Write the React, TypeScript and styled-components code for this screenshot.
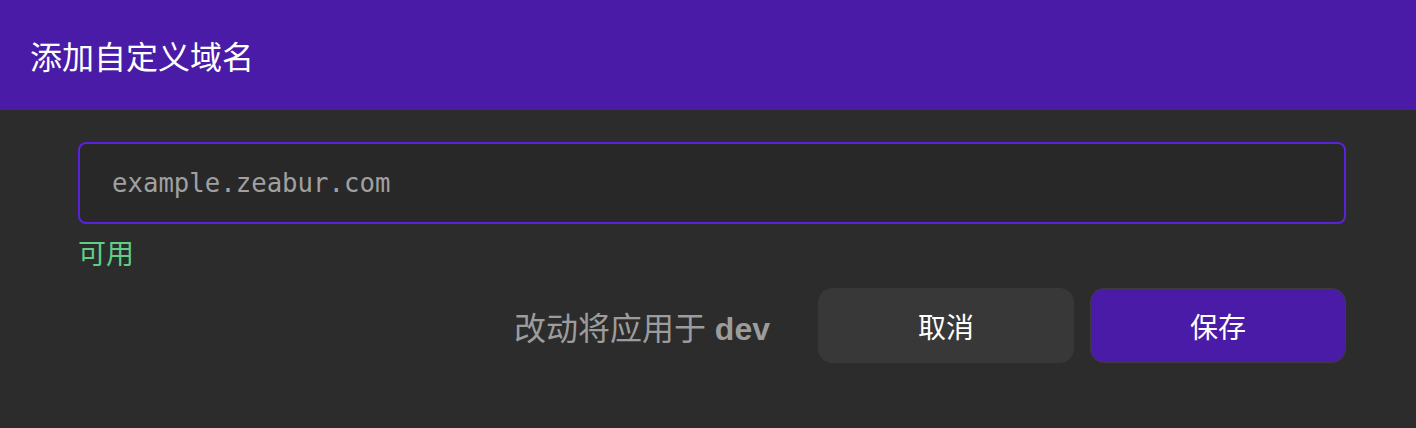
import React from "react";
import styled, { createGlobalStyle } from "styled-components";

const Global = createGlobalStyle`
  html, body { margin: 0; padding: 0; background: #2c2c2c; }
  body { font-family: "Liberation Sans", "Noto Sans CJK SC", sans-serif; }
  * { box-sizing: border-box; }
`;

const Dialog = styled.div`
  width: 1416px;
  height: 428px;
  display: flex;
  flex-direction: column;
  background: #2c2c2c;
`;

const Header = styled.header`
  height: 110px;
  flex-shrink: 0;
  display: flex;
  align-items: center;
  padding-left: 30px;
  background: #4a1ba6;
  color: #ffffff;
  font-size: 32px;
  font-family: "Noto Sans CJK SC", sans-serif;
`;

const Body = styled.div`
  display: flex;
  flex-direction: column;
  padding: 32px 70px 0 78px;
`;

const Input = styled.input`
  height: 82px;
  width: 100%;
  border: 2px solid #5a22dc;
  border-radius: 8px;
  background: #282828;
  padding: 0 32px;
  color: #e0e0e0;
  font-family: "DejaVu Sans Mono", monospace;
  font-size: 25.7px;
  outline: none;
  &::placeholder { color: #a0a0a0; }
`;

const Helper = styled.div`
  margin-top: 8px;
  line-height: 40px;
  height: 40px;
  font-size: 28px;
  color: #5fcf86;
  font-family: "Noto Sans CJK SC", sans-serif;
`;

const Actions = styled.div`
  margin-top: 16px;
  display: flex;
  justify-content: flex-end;
  align-items: center;
  gap: 16px;
`;

const Note = styled.span`
  margin-right: 32px;
  font-size: 32px;
  color: #9c9c9c;
  font-family: "Liberation Sans", "Noto Sans CJK SC", sans-serif;
  b { font-weight: 700; }
`;

const Button = styled.button<{ $primary?: boolean }>`
  width: 256px;
  height: 75px;
  border-radius: 14px;
  border: 1px solid ${(p) => (p.$primary ? "#3c3c3c" : "#383838")};
  background: ${(p) => (p.$primary ? "#4a1ba6" : "#383838")};
  color: #ffffff;
  font-size: 28px;
  font-family: "Noto Sans CJK SC", sans-serif;
  cursor: pointer;
`;

export default function App() {
  return (
    <>
      <Global />
      <Dialog>
        <Header>添加自定义域名</Header>
        <Body>
          <Input placeholder="example.zeabur.com" />
          <Helper>可用</Helper>
          <Actions>
            <Note>
              改动将应用于 <b>dev</b>
            </Note>
            <Button>取消</Button>
            <Button $primary>保存</Button>
          </Actions>
        </Body>
      </Dialog>
    </>
  );
}
